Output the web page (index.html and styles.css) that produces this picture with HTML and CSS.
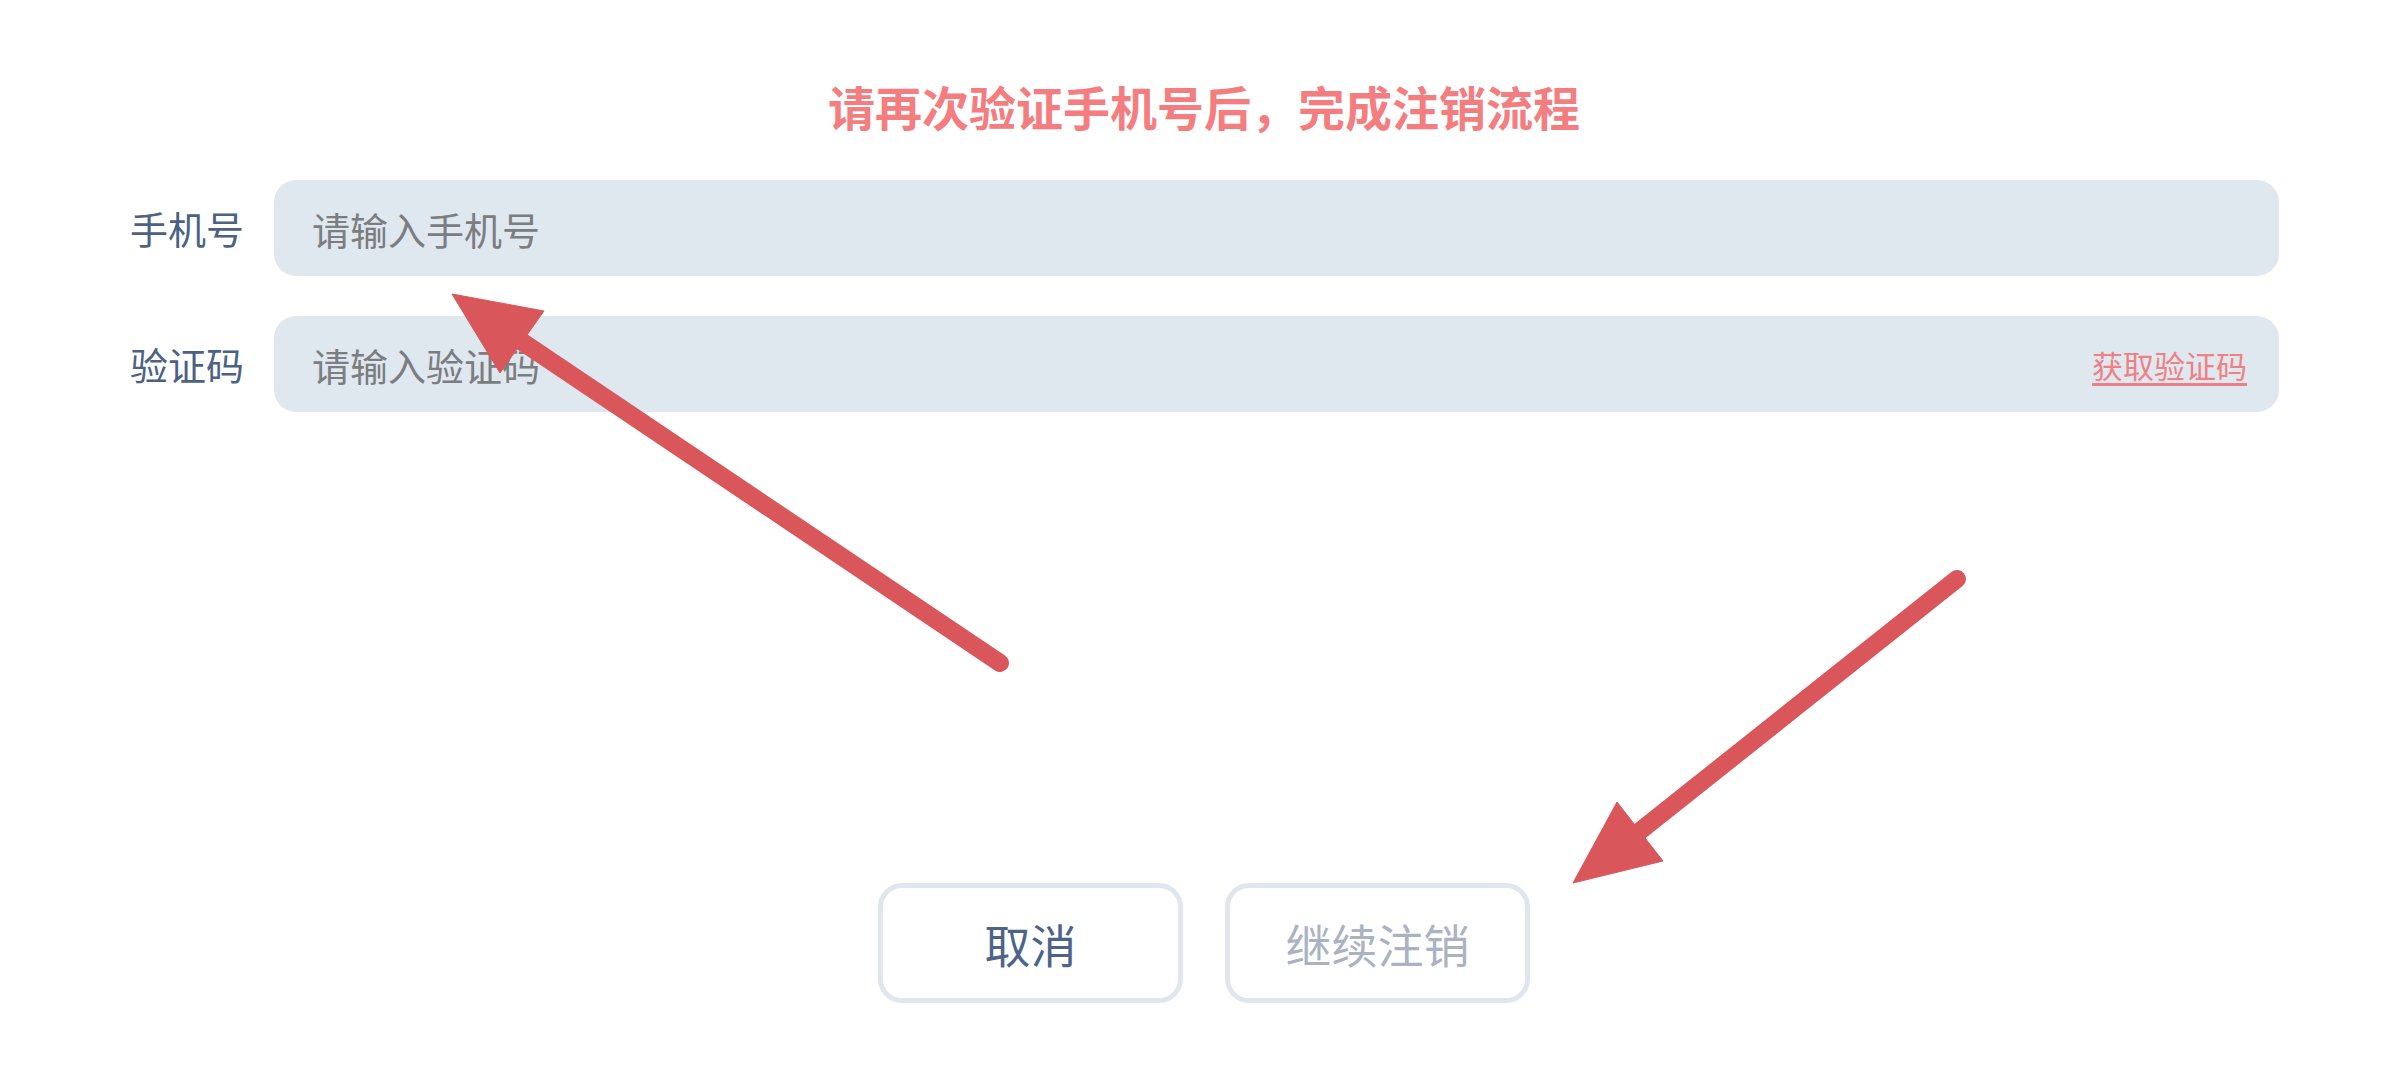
FILE: index.html
```html
<!DOCTYPE html>
<html lang="zh-CN">
<head>
<meta charset="utf-8">
<title>注销验证</title>
<link rel="stylesheet" href="styles.css">
</head>
<body>
<main class="page">
  <h1 class="title">请再次验证手机号后，完成注销流程</h1>
  <form class="form">
    <div class="row">
      <label class="label" for="phone">手机号</label>
      <div class="field">
        <input class="input" id="phone" type="tel" placeholder="请输入手机号">
      </div>
    </div>
    <div class="row">
      <label class="label" for="code">验证码</label>
      <div class="field">
        <input class="input" id="code" type="text" placeholder="请输入验证码">
        <a class="get-code" href="#">获取验证码</a>
      </div>
    </div>
  </form>
  <div class="actions">
    <button class="btn btn-cancel" type="button">取消</button>
    <button class="btn btn-continue" type="button">继续注销</button>
  </div>
</main>
<svg class="overlay" width="2408" height="1080" viewBox="0 0 2408 1080" xmlns="http://www.w3.org/2000/svg">
  <g fill="#d9575b" stroke="#d9575b">
    <line x1="1000" y1="663" x2="515" y2="337" stroke-width="18" stroke-linecap="round"/>
    <polygon points="452,294 544,311 500,373" stroke-width="1" stroke-linejoin="miter"/>
    <line x1="1957" y1="579" x2="1635" y2="835" stroke-width="18" stroke-linecap="round"/>
    <polygon points="1573,883 1617,802 1663,861" stroke-width="1"/>
  </g>
</svg>
</body>
</html>
```
FILE: styles.css
```css
* {
  box-sizing: border-box;
}

html, body {
  margin: 0;
  padding: 0;
  background: #ffffff;
}

body {
  width: 2408px;
  height: 1080px;
  overflow: hidden;
  position: relative;
  font-family: "Noto Sans CJK SC", "Noto Sans", sans-serif;
}

.page {
  display: flex;
  flex-direction: column;
  padding-top: 76px;
}

.title {
  margin: 0;
  height: 60px;
  line-height: 60px;
  text-align: center;
  font-size: 47px;
  font-weight: 700;
  color: #f47d80;
}

.form {
  display: flex;
  flex-direction: column;
  gap: 40px;
  margin-top: 44px;
  padding: 0 129px 0 130px;
}

.row {
  display: flex;
  align-items: center;
  gap: 30px;
  height: 96px;
}

.label {
  flex: none;
  font-size: 38px;
  color: #4b6284;
  line-height: 1;
}

.field {
  flex: 1;
  height: 96px;
  display: flex;
  align-items: center;
  background: #dfe7ef;
  border-radius: 22px;
  padding: 0 32px 0 38px;
}

.input {
  flex: 1;
  min-width: 0;
  height: 100%;
  border: none;
  outline: none;
  background: transparent;
  padding: 0;
  font-family: "Noto Sans CJK SC", "Noto Sans", sans-serif;
  font-size: 38px;
  color: #444;
}

.input::placeholder {
  color: #7b7d80;
}

.get-code {
  flex: none;
  font-size: 31px;
  color: #f08084;
  text-decoration: underline;
  text-underline-offset: 5px;
  text-decoration-thickness: 3px;
}

.actions {
  display: flex;
  justify-content: center;
  gap: 42px;
  margin-top: 471px;
}

.btn {
  width: 305px;
  height: 120px;
  border: 5px solid #dfe6ee;
  border-radius: 24px;
  background: #ffffff;
  font-family: "Noto Sans CJK SC", "Noto Sans", sans-serif;
  font-size: 46px;
  padding: 0;
  cursor: pointer;
}

.btn-cancel {
  color: #4d6488;
}

.btn-continue {
  color: #a9b3c3;
}

.overlay {
  position: absolute;
  top: 0;
  left: 0;
  pointer-events: none;
}
```
